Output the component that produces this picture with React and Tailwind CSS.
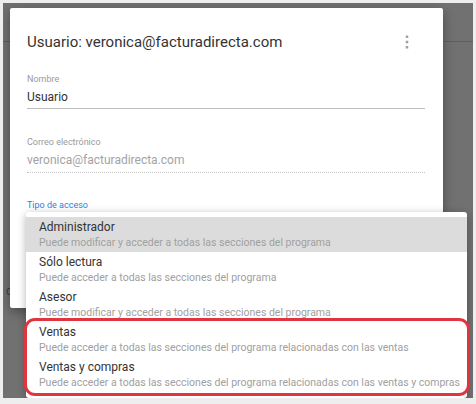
import React from 'react';

const OPTIONS = [
  { title: 'Administrador', desc: 'Puede modificar y acceder a todas las secciones del programa', active: true },
  { title: 'Sólo lectura', desc: 'Puede acceder a todas las secciones del programa' },
  { title: 'Asesor', desc: 'Puede modificar y acceder a todas las secciones del programa' },
  { title: 'Ventas', desc: 'Puede acceder a todas las secciones del programa relacionadas con las ventas' },
  { title: 'Ventas y compras', desc: 'Puede acceder a todas las secciones del programa relacionadas con las ventas y compras' },
];

const Field = ({ label, value, muted, dotted }) => (
  <div>
    <div className="text-[9px] leading-[11px] text-[#9a9a9a]">{label}</div>
    <div
      className={`mt-[4px] text-[12px] leading-[16px] ${
        muted ? 'text-[#a3a3a3] pb-[4px] border-b border-dotted border-[#c4c4c4]' : 'text-[#333] pb-[3px] border-b border-[#bdbdbd]'
      }`}
    >
      {value}
    </div>
  </div>
);

export default function App() {
  return (
    <div className="w-[476px] h-[404px] bg-[#eeeeee] p-[3px] font-['Roboto',sans-serif]">
      <div className="relative w-full h-[395px] bg-[#717171] overflow-hidden">
        {/* página de fondo */}
        <div className="absolute left-0 right-0 top-[38px] h-[1px] bg-[#5e5e5e]" />
        <div className="absolute left-[3px] top-[279px] text-[12px] text-[#3e3e3e]">c</div>

        {/* diálogo */}
        <div className="absolute left-[7px] top-[5px] w-[433px] h-[300px] bg-white rounded-[2px] shadow-[0_4px_12px_rgba(0,0,0,0.35)] pl-[17px] pr-[18px] pt-[24px]">
          <div className="flex items-center justify-between pr-[16px]">
            <h1 className="text-[15px] leading-[20px] text-[#333]">Usuario: veronica@facturadirecta.com</h1>
            <svg width="4" height="16" viewBox="0 0 4 16">
              <rect x="0.75" y="1.5" width="2.5" height="2.5" fill="#a0a0a0" />
              <rect x="0.75" y="6.75" width="2.5" height="2.5" fill="#a0a0a0" />
              <rect x="0.75" y="12" width="2.5" height="2.5" fill="#a0a0a0" />
            </svg>
          </div>
          <div className="mt-[22px] flex flex-col gap-[28px]">
            <Field label="Nombre" value="Usuario" />
            <Field label="Correo electrónico" value="veronica@facturadirecta.com" muted dotted />
            <div className="text-[9px] leading-[11px] text-[#2f80e0] -mt-[1px]">Tipo de acceso</div>
          </div>
        </div>

        {/* menú desplegable */}
        <div className="absolute left-[23px] top-[209px] w-[441px] bg-white rounded-[3px] shadow-[0_2px_8px_rgba(0,0,0,0.3)] pt-[5px] pb-[6px]">
          {OPTIONS.map((o) => (
            <div key={o.title} className={`h-[35px] pl-[13px] flex flex-col justify-center ${o.active ? 'bg-[#dcdcdc]' : ''}`}>
              <div className="text-[12px] leading-[16px] text-[#333]">{o.title}</div>
              <div className="text-[10.5px] leading-[14px] text-[#a0a0a0] mt-[1px]">{o.desc}</div>
            </div>
          ))}
        </div>

        {/* marca roja */}
        <div className="absolute left-[21px] top-[315px] w-[446px] h-[78px] border-[3px] border-[#e0343f] rounded-[11px]" />
      </div>
    </div>
  );
}
